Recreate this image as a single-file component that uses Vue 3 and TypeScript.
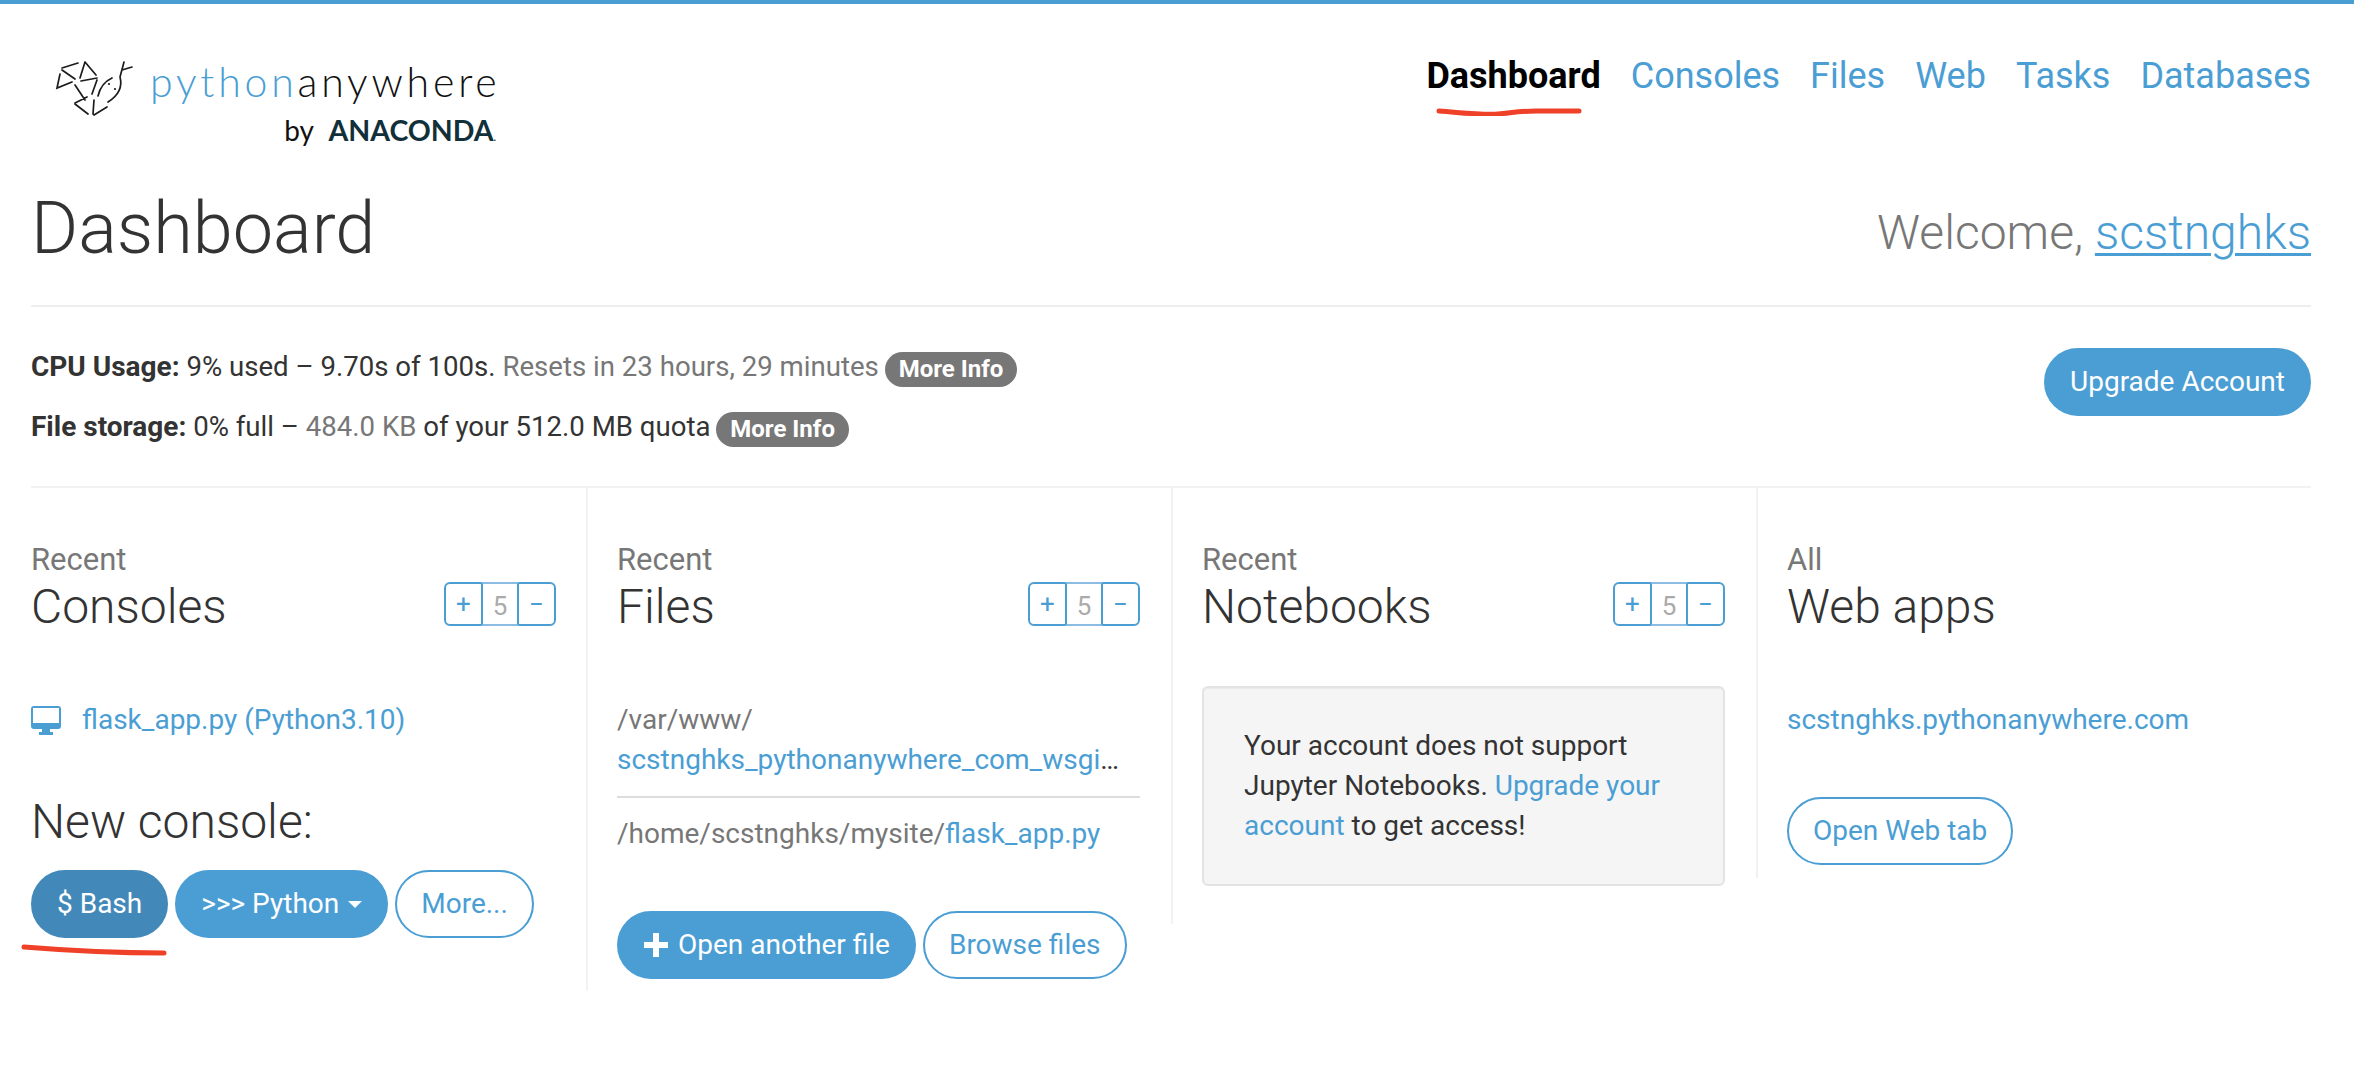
<script setup lang="ts">
const navLinks: string[] = ["Consoles", "Files", "Web", "Tasks", "Databases"];
</script>

<template>
  <div class="page">
    <header class="topbar">
      <div class="logo">
        <svg class="logo__mark" viewBox="0 0 100 80" fill="none" stroke="#1c1c1c" stroke-width="1.7" stroke-linecap="round">
          <path d="M20 18L36 13M20 20L33 29M18 24L15 38L30 32M43 12L54 25M43 12L38 28M39 31L55 28M55 30L50 44M33 35L43 50M45 47L33 53M33 54L46 64M52 50L51 64M52 65L65 57" />
          <path d="M70 28Q59 33 56 46M78 27Q82 42 66 52M78 27L82 12M80 20L90 17" />
          <circle cx="67" cy="34" r="1.1" fill="#1c1c1c" stroke="none" />
          <circle cx="73" cy="39" r="1.1" fill="#1c1c1c" stroke="none" />
        </svg>
        <div class="logo__text">
          <div class="logo__name"><span class="logo__python">python</span>anywhere</div>
          <div class="logo__by">by <b>ANACONDA</b><i>.</i></div>
        </div>
      </div>
      <nav class="nav">
        <a class="nav__link nav__link--active">
          Dashboard
          <svg class="scribble scribble--nav" viewBox="0 0 146 8" fill="none">
            <path d="M3 3C30 5 45 7 62 6C75 5 82 3 100 3L143 3" stroke="#ee4128" stroke-width="5" stroke-linecap="round" />
          </svg>
        </a>
        <a v-for="link in navLinks" :key="link" class="nav__link">{{ link }}</a>
      </nav>
    </header>

    <div class="title-row">
      <h1 class="title">Dashboard</h1>
      <div class="welcome">Welcome, <a>scstnghks</a></div>
    </div>

    <section class="usage">
      <div class="usage__lines">
        <p class="usage__line">
          <b>CPU Usage:</b> 9% used – 9.70s of 100s. <span class="muted">Resets in 23 hours, 29 minutes</span> <span class="badge">More Info</span>
        </p>
        <p class="usage__line">
          <b>File storage:</b> 0% full – <span class="muted">484.0 KB</span> of your 512.0 MB quota <span class="badge">More Info</span>
        </p>
      </div>
      <a class="btn btn--solid btn--upgrade">Upgrade Account</a>
    </section>

    <div class="columns">
      <section class="col">
        <div class="col__kicker">Recent</div>
        <div class="col__head">
          <h2 class="col__title">Consoles</h2>
          <div class="stepper"><span>+</span><span class="stepper__num">5</span><span>−</span></div>
        </div>
        <div class="console-link">
          <svg class="desktop" viewBox="0 0 30 29">
            <path fill="#4a9ed4" d="M3 0H27A3 3 0 0 1 30 3V20A3 3 0 0 1 27 23H3A3 3 0 0 1 0 20V3A3 3 0 0 1 3 0ZM2 2V17H28V2Z" fill-rule="evenodd" />
            <path fill="#4a9ed4" d="M11 23H19V26H22V29H8V26H11Z" />
          </svg>
          <a>flask_app.py (Python3.10)</a>
        </div>
        <h3 class="new-console">New console:</h3>
        <div class="btn-row">
          <a class="btn btn--solid btn--active">
            $ Bash
            <svg class="scribble scribble--bash" viewBox="0 0 146 12" fill="none">
              <path d="M3 3C40 6 90 9 143 9" stroke="#ee4128" stroke-width="5" stroke-linecap="round" />
            </svg>
          </a>
          <a class="btn btn--solid">&gt;&gt;&gt; Python <i class="caret"></i></a>
          <a class="btn btn--outline">More...</a>
        </div>
      </section>

      <section class="col">
        <div class="col__kicker">Recent</div>
        <div class="col__head">
          <h2 class="col__title">Files</h2>
          <div class="stepper"><span>+</span><span class="stepper__num">5</span><span>−</span></div>
        </div>
        <ul class="files">
          <li class="files__item">
            <div>/var/www/</div>
            <div class="files__clip"><a>scstnghks_pythonanywhere_com_wsgi.py</a></div>
          </li>
          <li class="files__item">/home/scstnghks/mysite/<a>flask_app.py</a></li>
        </ul>
        <div class="btn-row btn-row--files">
          <a class="btn btn--solid">
            <svg class="plus" viewBox="0 0 26 26"><path fill="#fff" d="M10 1H16V10H25V16H16V25H10V16H1V10H10Z" /></svg>
            Open another file
          </a>
          <a class="btn btn--outline">Browse files</a>
        </div>
      </section>

      <section class="col col--notebooks">
        <div class="col__kicker">Recent</div>
        <div class="col__head">
          <h2 class="col__title">Notebooks</h2>
          <div class="stepper"><span>+</span><span class="stepper__num">5</span><span>−</span></div>
        </div>
        <div class="well">
          Your account does not support Jupyter Notebooks. <a>Upgrade your account</a> to get access!
        </div>
      </section>

      <section class="col">
        <div class="col__kicker">All</div>
        <div class="col__head">
          <h2 class="col__title">Web apps</h2>
        </div>
        <div class="webapp"><a>scstnghks.pythonanywhere.com</a></div>
        <a class="btn btn--outline">Open Web tab</a>
      </section>
    </div>
  </div>
</template>

<style>
body {
  background: #fff;
}
</style>

<style scoped>
.page {
  box-sizing: border-box;
  width: 2354px;
  height: 1088px;
  padding: 0 43px 0 31px;
  border-top: 4px solid #4a9ed4;
  font-family: Roboto, "Liberation Sans", sans-serif;
  font-size: 28px;
  line-height: 40px;
  color: #333;
  overflow: hidden;
}

a {
  color: #4a9ed4;
}

.topbar {
  display: flex;
  justify-content: space-between;
  height: 171px;
}

.logo {
  display: flex;
  margin: 46px 0 0 11px;
  height: 100px;
}

.logo__mark {
  width: 100px;
  height: 80px;
}

.logo__text {
  margin-left: 8px;
  text-align: right;
  font-family: Lato, sans-serif;
  color: #111;
}

.logo__name {
  margin-top: 10px;
  font-size: 41px;
  line-height: 44px;
  font-weight: 300;
  letter-spacing: 3.8px;
  white-space: nowrap;
}

.logo__python {
  color: #4a9ed4;
}

.logo__by {
  margin-top: 8px;
  padding-right: 4px;
  font-size: 28px;
  line-height: 36px;
  white-space: nowrap;
}

.logo__by b {
  margin-left: 8px;
  font-size: 28.5px;
  font-weight: 700;
  color: #12303a;
}

.logo__by i {
  font-size: 12px;
  color: #12303a;
}

.nav {
  display: flex;
  gap: 30px;
  padding-top: 51px;
  font-size: 36px;
  line-height: 42px;
}

.nav__link {
  position: relative;
}

.nav__link--active {
  color: #000;
  font-weight: 700;
}

.scribble {
  position: absolute;
  pointer-events: none;
}

.scribble--nav {
  left: 10px;
  top: 53px;
  width: 146px;
  height: 8px;
}

.scribble--bash {
  left: -12px;
  bottom: -20px;
  width: 146px;
  height: 12px;
}

.title-row {
  display: flex;
  justify-content: space-between;
  align-items: flex-end;
  height: 132px;
  border-bottom: 2px solid #eee;
  padding-bottom: 36px;
  box-sizing: border-box;
}

.title {
  margin: 0;
  font-size: 72px;
  line-height: 80px;
  font-weight: 300;
}

.welcome {
  font-size: 48px;
  line-height: 60px;
  font-weight: 300;
  color: #777;
  padding-bottom: 6px;
}

.welcome a {
  text-decoration: underline;
  text-decoration-thickness: 3px;
  text-underline-offset: 4px;
}

.usage {
  display: flex;
  justify-content: space-between;
  align-items: flex-start;
  height: 181px;
  box-sizing: border-box;
  border-bottom: 2px solid #f2f2f2;
}

.usage__lines {
  margin-top: 40px;
}

.usage__line {
  margin: 0;
  font-size: 27.6px;
  line-height: 40px;
}

.usage__line b {
  font-size: 28px;
}

.usage__line + .usage__line {
  margin-top: 20px;
}

.muted {
  color: #777;
}

.badge {
  display: inline-block;
  margin-left: -1px;
  padding: 0 14px;
  height: 35px;
  line-height: 35px;
  border-radius: 18px;
  background: #777;
  color: #fff;
  font-size: 24px;
  font-weight: 700;
  vertical-align: -1px;
}

.btn {
  position: relative;
  display: inline-flex;
  align-items: center;
  box-sizing: border-box;
  height: 68px;
  padding: 0 24px;
  border: 2px solid #4a9ed4;
  border-radius: 34px;
  white-space: nowrap;
}

.btn--upgrade {
  margin-top: 41px;
}

.btn--solid {
  background: #4a9ed4;
  color: #fff;
}

.btn--outline {
  background: #fff;
  color: #4a9ed4;
}

.btn--active {
  background: #4289ba;
  border-color: #4289ba;
}

.columns {
  display: grid;
  grid-template-columns: 555px 585px 585px 1fr;
  align-items: start;
  margin-right: -43px;
}

.col {
  box-sizing: border-box;
  padding: 52px 31px 0 29px;
  border-left: 2px solid #f2f2f2;
}

.col:first-child {
  padding-left: 0;
  padding-right: 30px;
  border-left: 0;
}

.col:last-child {
  padding-bottom: 13px;
}

.col--notebooks {
  padding-bottom: 38px;
}

.col__kicker {
  color: #777;
  font-size: 31px;
  line-height: 40px;
}

.col__head {
  display: flex;
  justify-content: space-between;
  align-items: center;
  height: 52px;
}

.col__title {
  margin: 2px 0 0;
  font-size: 48px;
  line-height: 50px;
  font-weight: 300;
}

.stepper {
  display: flex;
  box-sizing: border-box;
  height: 44px;
  margin-top: -4px;
  border: 2px solid #4a9ed4;
  border-radius: 6px;
  color: #4a9ed4;
  font-size: 26px;
  line-height: 40px;
  text-align: center;
}

.stepper span {
  width: 35px;
}

.stepper .stepper__num {
  width: 34px;
  margin: -2px 0;
  padding-top: 2px;
  border: 2px solid #8bbde3;
  border-left-color: #4a9ed4;
  border-right-color: #4a9ed4;
  color: #aaa;
}

.console-link {
  display: flex;
  align-items: center;
  gap: 21px;
  margin-top: 68px;
}

.desktop {
  width: 30px;
  height: 29px;
}

.new-console {
  margin: 52px 0 0;
  font-size: 48px;
  line-height: 60px;
  font-weight: 300;
}

.btn-row {
  display: flex;
  gap: 7px;
  margin-top: 18px;
}

.btn-row--files {
  margin-top: 57px;
  padding-bottom: 12px;
}

.caret {
  display: inline-block;
  margin-left: 9px;
  border-top: 7px solid #fff;
  border-left: 7px solid transparent;
  border-right: 7px solid transparent;
}

.plus {
  width: 26px;
  height: 26px;
  margin-right: 9px;
}

.files {
  margin: 68px 0 0;
  padding: 0;
  list-style: none;
  color: #777;
}

.files__item + .files__item {
  margin-top: 16px;
  padding-top: 16px;
  border-top: 2px solid #ddd;
}

.files__clip {
  max-width: 506px;
  overflow: hidden;
  white-space: nowrap;
  text-overflow: ellipsis;
  color: #333;
}

.well {
  box-sizing: border-box;
  height: 200px;
  margin-top: 54px;
  padding: 38px 40px;
  background: #f5f5f5;
  border: 2px solid #e3e3e3;
  border-radius: 6px;
  box-shadow: inset 0 1px 1px rgba(0, 0, 0, 0.05);
}

.webapp {
  margin-top: 68px;
  margin-bottom: 57px;
}
</style>
